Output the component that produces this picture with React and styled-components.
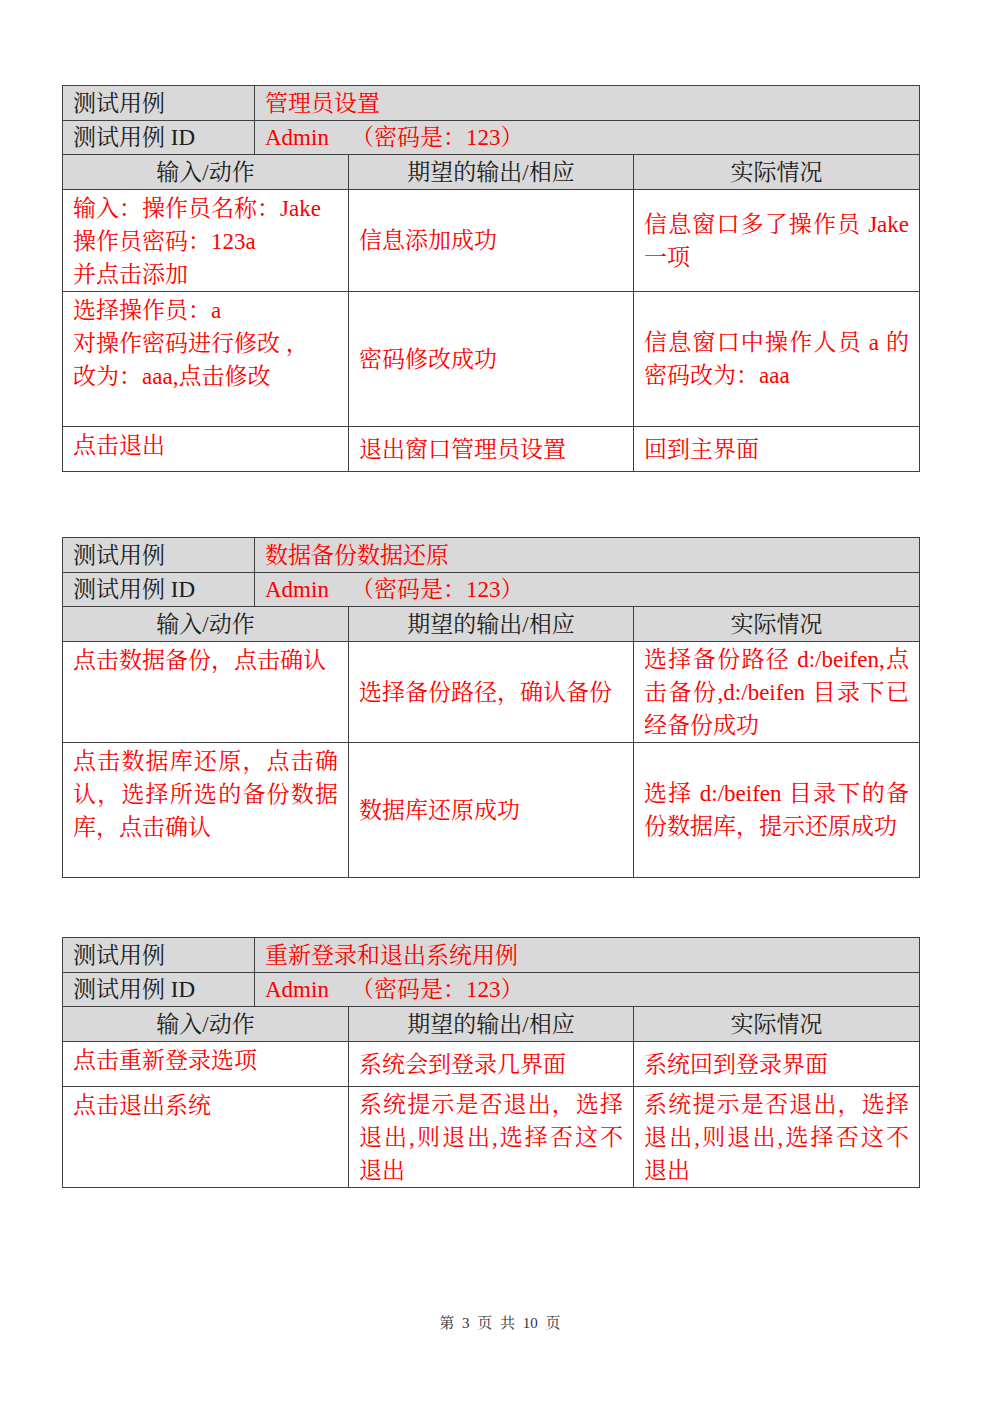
import React from 'react';
import styled, { createGlobalStyle } from 'styled-components';

const Global = createGlobalStyle`
  html, body { margin: 0; padding: 0; background: #ffffff; }
  body { font-family: "Liberation Serif", "Noto Serif CJK SC", "Noto Sans CJK SC", serif; }
`;

const Page = styled.div`
  width: 1000px;
  height: 1415px;
  box-sizing: border-box;
  padding: 85px 0 0 62px;
  display: flex;
  flex-direction: column;
  align-items: flex-start;
`;

const Table = styled.table`
  width: 857px;
  table-layout: fixed;
  border-collapse: collapse;
  margin-bottom: ${p => p.$gap}px;
  font-size: 23px;
  line-height: 33px;
`;

const Row = styled.tr`
  height: ${p => p.$h}px;
`;

const GreyCell = styled.td`
  border: 1px solid #404040;
  background: #d9d9d9;
  color: ${p => (p.$red ? '#ff0000' : '#1c1c1c')};
  padding: 0 10px;
  text-align: ${p => (p.$center ? 'center' : 'left')};
  vertical-align: middle;
  white-space: pre;
`;

const Gap = styled.span`
  display: inline-block;
  width: ${p => p.$w}px;
`;

const BodyCell = styled.td`
  border: 1px solid #404040;
  background: #ffffff;
  color: #ff0000;
  padding: ${p => (p.$top ? '2px 10px 0' : '0 10px')};
  vertical-align: ${p => (p.$top ? 'top' : 'middle')};
`;

const Line = styled.span`
  display: block;
  white-space: pre;
  text-align: ${p => (p.$fill ? 'justify' : 'left')};
  text-align-last: ${p => (p.$fill ? 'justify' : 'left')};
`;

const Footer = styled.div`
  align-self: stretch;
  margin-left: -62px;
  margin-top: 125px;
  text-align: center;
  font-size: 15px;
  line-height: 20px;
  color: #333333;
  word-spacing: 4px;
`;

const Cell = ({ c, top }) => (
  <BodyCell $top={top} colSpan={top ? 2 : 1}>
    {c.lines.map((t, i) => (
      <Line key={i} $fill={i < (c.fill || 0)}>{t}</Line>
    ))}
  </BodyCell>
);

const cases = [
  {
    title: '管理员设置',
    gap: 65,
    rows: [
      {
        h: 101,
        cells: [
          { lines: ['输入：操作员名称：Jake', '操作员密码：123a', '并点击添加'] },
          { lines: ['信息添加成功'] },
          { lines: ['信息窗口多了操作员 Jake', '一项'], fill: 1 },
        ],
      },
      {
        h: 135,
        cells: [
          { lines: ['选择操作员：a', '对操作密码进行修改 ，', '改为：aaa,点击修改'] },
          { lines: ['密码修改成功'] },
          { lines: ['信息窗口中操作人员 a 的', '密码改为：aaa'], fill: 1 },
        ],
      },
      {
        h: 45,
        cells: [
          { lines: ['点击退出'] },
          { lines: ['退出窗口管理员设置'] },
          { lines: ['回到主界面'] },
        ],
      },
    ],
  },
  {
    title: '数据备份数据还原',
    gap: 59,
    rows: [
      {
        h: 101,
        cells: [
          { lines: ['点击数据备份，点击确认'] },
          { lines: ['选择备份路径，确认备份'] },
          { lines: ['选择备份路径 d:/beifen,点', '击备份,d:/beifen 目录下已', '经备份成功'], fill: 2 },
        ],
      },
      {
        h: 135,
        cells: [
          { lines: ['点击数据库还原，点击确', '认，选择所选的备份数据', '库，点击确认'], fill: 2 },
          { lines: ['数据库还原成功'] },
          { lines: ['选择 d:/beifen 目录下的备', '份数据库，提示还原成功'], fill: 1 },
        ],
      },
    ],
  },
  {
    title: '重新登录和退出系统用例',
    gap: 0,
    rows: [
      {
        h: 45,
        cells: [
          { lines: ['点击重新登录选项'] },
          { lines: ['系统会到登录几界面'] },
          { lines: ['系统回到登录界面'] },
        ],
      },
      {
        h: 101,
        cells: [
          { lines: ['点击退出系统'] },
          { lines: ['系统提示是否退出，选择', '退出,则退出,选择否这不', '退出'], fill: 2 },
          { lines: ['系统提示是否退出，选择', '退出,则退出,选择否这不', '退出'], fill: 2 },
        ],
      },
    ],
  },
];

const TestCase = ({ data }) => (
  <Table $gap={data.gap}>
    <colgroup>
      <col style={{ width: 192 }} />
      <col style={{ width: 94 }} />
      <col style={{ width: 285 }} />
      <col style={{ width: 286 }} />
    </colgroup>
    <tbody>
      <Row $h={35}>
        <GreyCell>测试用例</GreyCell>
        <GreyCell $red colSpan={3}>{data.title}</GreyCell>
      </Row>
      <Row $h={34}>
        <GreyCell>测试用例 ID</GreyCell>
        <GreyCell $red colSpan={3}>Admin<Gap $w={22} />（密码是：123）</GreyCell>
      </Row>
      <Row $h={35}>
        <GreyCell $center colSpan={2}>输入/动作</GreyCell>
        <GreyCell $center>期望的输出/相应</GreyCell>
        <GreyCell $center>实际情况</GreyCell>
      </Row>
      {data.rows.map((r, i) => (
        <Row key={i} $h={r.h}>
          <Cell c={r.cells[0]} top />
          <Cell c={r.cells[1]} />
          <Cell c={r.cells[2]} />
        </Row>
      ))}
    </tbody>
  </Table>
);

export default function App() {
  return (
    <>
      <Global />
      <Page>
        {cases.map((c, i) => (
          <TestCase key={i} data={c} />
        ))}
        <Footer>第 3 页 共 10 页</Footer>
      </Page>
    </>
  );
}
